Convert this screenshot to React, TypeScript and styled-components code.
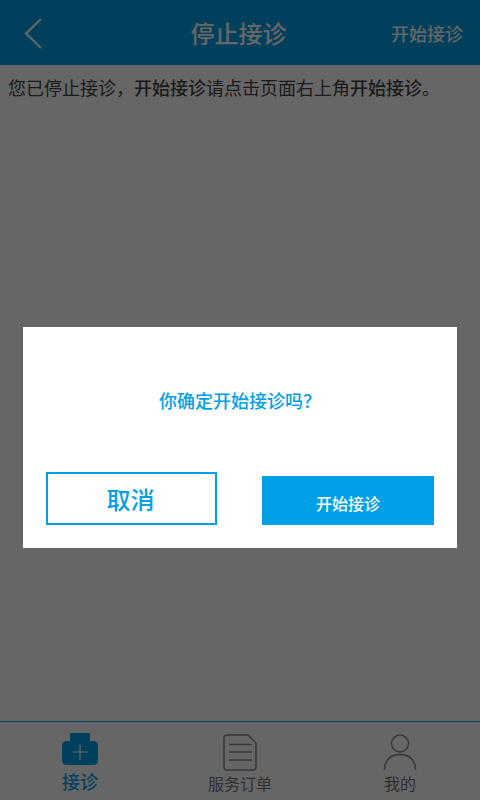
import React from "react";
import styled, { createGlobalStyle } from "styled-components";

const Global = createGlobalStyle`
  html, body { margin: 0; padding: 0; background: #fff; }
  * { box-sizing: border-box; }
  body { font-family: "Noto Sans CJK SC", "Noto Sans", sans-serif; }
`;

const Page = styled.div`
  width: 480px;
  height: 800px;
  display: flex;
  flex-direction: column;
  background: #fff;
  overflow: hidden;
`;

const Header = styled.header`
  height: 65px;
  flex: none;
  background: #00a0e9;
  display: grid;
  grid-template-columns: 1fr auto 1fr;
  align-items: center;
  padding: 0 17px 0 24px;
  color: #fff;
`;

const BackButton = styled.div`
  display: flex;
  align-items: center;
`;

const Title = styled.h1`
  margin: 0 10px 0 0;
  font-size: 24px;
  font-weight: 500;
  line-height: 65px;
`;

const HeaderAction = styled.div`
  justify-self: end;
  font-size: 18px;
  font-weight: 500;
`;

const Notice = styled.p`
  flex: 1;
  margin: 0;
  padding: 8px 8px;
  font-size: 18px;
  line-height: 28px;
  color: #444;
  font-weight: 400;
`;

const Emphasis = styled.strong`
  font-weight: 500;
`;

const TabBar = styled.nav`
  height: 79px;
  flex: none;
  border-top: 1px solid #00a0e9;
  display: grid;
  grid-template-columns: repeat(3, 1fr);
  background: #fff;
`;

const Tab = styled.div<{ $active?: boolean }>`
  display: flex;
  flex-direction: column;
  align-items: center;
  padding-top: ${(p) => (p.$active ? "11px" : "12px")};
  color: ${(p) => (p.$active ? "#00a0e9" : "#777")};
  font-size: ${(p) => (p.$active ? "18px" : "16px")};
  font-weight: ${(p) => (p.$active ? 500 : 400)};
`;

const TabLabel = styled.span<{ $active?: boolean }>`
  line-height: 20px;
  margin-top: ${(p) => (p.$active ? "5px" : "2px")};
`;

const Overlay = styled.div`
  position: fixed;
  left: 0;
  top: 0;
  width: 480px;
  height: 800px;
  background: rgba(0, 0, 0, 0.6);
  display: flex;
  flex-direction: column;
  align-items: center;
  padding-top: 327px;
`;

const Dialog = styled.div`
  width: 434px;
  height: 221px;
  background: #fff;
  display: flex;
  flex-direction: column;
  padding: 0 23px;
`;

const Question = styled.div`
  height: 145px;
  display: flex;
  align-items: center;
  justify-content: center;
  color: #00a0e9;
  font-size: 18px;
  font-weight: 500;
`;

const Actions = styled.div`
  display: flex;
  justify-content: space-between;
  align-items: flex-end;
`;

const CancelButton = styled.button`
  width: 171px;
  height: 53px;
  padding: 0 2px 0 0;
  background: #fff;
  border: 2px solid #00a0e9;
  color: #00a0e9;
  font-family: inherit;
  font-size: 24px;
  font-weight: 500;
`;

const ConfirmButton = styled.button`
  width: 172px;
  height: 49px;
  padding: 4px 0 0;
  background: #00a0e9;
  border: none;
  color: #fff;
  font-family: inherit;
  font-size: 16px;
  font-weight: 500;
`;

const BackIcon = () => (
  <svg width="20" height="32" viewBox="0 0 20 32" fill="none">
    <path d="M17 2 L2 16.5 L17 31" stroke="#fff" strokeWidth="2.2" />
  </svg>
);

const ClinicIcon = () => (
  <svg width="36" height="33" viewBox="0 0 36 33">
    <path
      d="M8 1.5 Q8 0 9.5 0 H26.5 Q28 0 28 1.5 V8 H31 Q36 8 36 13 V27 Q36 32 31 32 H5 Q0 32 0 27 V13 Q0 8 5 8 H8 Z"
      fill="#00a0e9"
    />
    <path d="M18 11.5 V27 M10.5 19 H26" stroke="#fff" strokeWidth="1.2" />
  </svg>
);

const OrderIcon = () => (
  <svg width="34" height="37" viewBox="0 0 34 37" fill="none" stroke="#888">
    <path
      d="M4 1 H25 L33 9 V33 Q33 36 30 36 H4 Q1 36 1 33 V4 Q1 1 4 1 Z"
      strokeWidth="1.5"
    />
    <path d="M6 10.5 H29 M6 18 H29 M6 26 H29" strokeWidth="1.3" />
  </svg>
);

const UserIcon = () => (
  <svg width="34" height="37" viewBox="0 0 34 37" fill="none" stroke="#888" strokeWidth="1.5">
    <circle cx="17" cy="9.5" r="8.5" />
    <path d="M1.5 36 C1.5 26 8 20.5 17 20.5 C26 20.5 32.5 26 32.5 36" />
  </svg>
);

export default function App() {
  return (
    <>
      <Global />
      <Page>
        <Header>
          <BackButton>
            <BackIcon />
          </BackButton>
          <Title>停止接诊</Title>
          <HeaderAction>开始接诊</HeaderAction>
        </Header>
        <Notice>
          您已停止接诊，<Emphasis>开始接诊</Emphasis>请点击页面右上角<Emphasis>开始接诊</Emphasis>。
        </Notice>
        <TabBar>
          <Tab $active>
            <ClinicIcon />
            <TabLabel $active>接诊</TabLabel>
          </Tab>
          <Tab>
            <OrderIcon />
            <TabLabel>服务订单</TabLabel>
          </Tab>
          <Tab>
            <UserIcon />
            <TabLabel>我的</TabLabel>
          </Tab>
        </TabBar>
      </Page>
      <Overlay>
        <Dialog>
          <Question>你确定开始接诊吗？</Question>
          <Actions>
            <CancelButton>取消</CancelButton>
            <ConfirmButton>开始接诊</ConfirmButton>
          </Actions>
        </Dialog>
      </Overlay>
    </>
  );
}
